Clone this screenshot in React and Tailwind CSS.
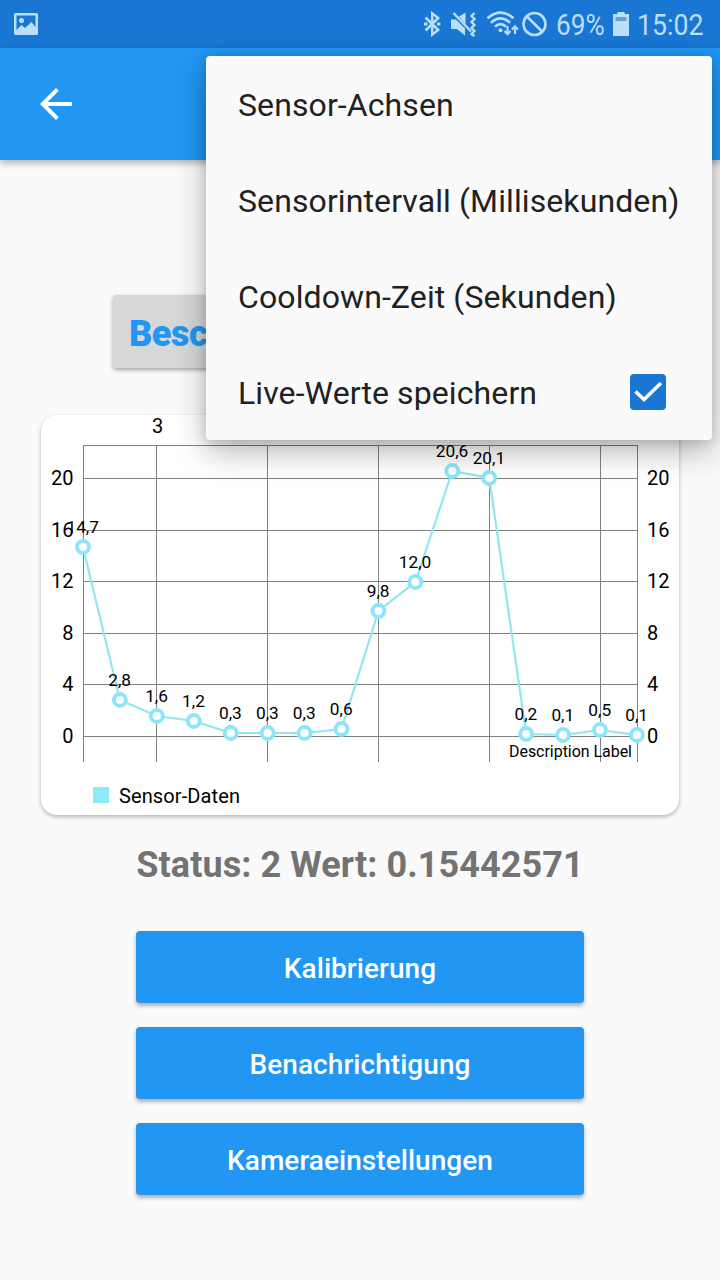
import React from "react";

const values = [
  [547, "14,7"], [700, "2,8"], [716, "1,6"], [721, "1,2"],
  [733, "0,3"], [733, "0,3"], [733, "0,3"], [729, "0,6"],
  [611, "9,8"], [582, "12,0"], [471, "20,6"], [478, "20,1"],
  [734, "0,2"], [735, "0,1"], [730, "0,5"], [735, "0,1"],
];
const points = values.map(([y, label], i) => ({ x: 83 + i * 36.93, y, label }));
const rows = [[478.5, 20], [530.5, 16], [581.5, 12], [633.5, 8], [684.5, 4], [736.5, 0]];
const columns = [83.5, 156.5, 267.5, 378.5, 489.5, 600.5, 637.5];

function StatusBar() {
  return (
    <div className="flex h-12 items-center bg-[#1976d2] pl-3.5 pr-4 text-[#bbdefb]">
      <svg className="h-6 w-6" viewBox="0 0 24 24" fill="currentColor">
        <path fillRule="evenodd" d="M1.500 1h21q1.500 0 1.500 1.500v19q0 1.500-1.500 1.500h-21Q0 23 0 21.500v-19Q0 1 1.500 1Zm1 2.500V18l5-5 3.500 3 6.500-6 4 5V3.500Z" />
        <circle cx="7.500" cy="8.500" r="2.500" />
      </svg>
      <svg className="ml-auto h-12 w-[128px]" viewBox="422 0 128 48" fill="none" stroke="currentColor" strokeWidth="2">
        <path strokeWidth="2.500" d="m425.500 17.500 12.700 12.500-6 4.700V13.300l6 4.700-12.700 12.500" />
        <path fill="currentColor" stroke="none" d="M424 22.400h3.500v3.200H424zM437 22.400h3.500v3.200H437zM451 19.500h5l9 9v7l-8-6.500h-6zM459 16.500l6.500-4v12z" />
        <path strokeWidth="2.400" d="m453.500 13 17.500 18.500" />
        <path strokeWidth="2.400" d="m474.500 13-3 3 3 3-3 3 3 3-3 3 3 3-3 3 3 2" />
        <path strokeWidth="2.600" d="M487.500 18.200q13.500-11 26 0M491 22.700q9.500-8.500 19 0M495 26.700q5.500-5 11 0" />
        <circle cx="500.500" cy="30.200" r="2" fill="currentColor" stroke="none" />
        <path strokeWidth="2" d="M507.500 26v8m-3-3 3 3.300 3-3.300M515 34v-7.500m-3 3 3-3.200 3 3.200" />
        <circle cx="534.500" cy="24" r="11" strokeWidth="2.600" />
        <path strokeWidth="2.600" d="m527 16.500 15 15" />
      </svg>
      <span className="ml-[6px] w-[49px] whitespace-nowrap font-[Roboto,sans-serif] text-[30px] leading-none"><span className="inline-block origin-left translate-y-px scale-x-[0.875]">69%</span></span>
      <svg className="ml-[8px] h-6 w-4" viewBox="0 0 16 24" fill="currentColor">
        <path d="M4.500 0h7v2H16v22H0V2h4.500z" />
        <path fill="#64a0d8" d="M2.500 5h11v4h-11z" />
      </svg>
      <span className="ml-[8px] w-[67px] whitespace-nowrap font-[Roboto,sans-serif] text-[30px] leading-none"><span className="inline-block origin-left translate-y-px scale-x-[0.89]">15:02</span></span>
    </div>
  );
}

function SensorChart() {
  return (
    <svg className="block h-[400px] w-[638px] overflow-visible font-[Roboto,sans-serif]" viewBox="41 415 638 400" fill="black">
      <g stroke="#808080" strokeWidth="1">
        <path d="M83 445.500H638" />
        {rows.map(([y]) => <path key={y} d={`M83 ${y}H638`} />)}
        {columns.map((x) => <path key={x} d={`M${x} 445V762`} />)}
      </g>
      <text x="157.500" y="432.500" fontSize="20" textAnchor="middle">3</text>
      {rows.map(([y, label]) => (
        <g key={label} fontSize="20">
          <text x="73.500" y={y + 6.5} textAnchor="end">{label}</text>
          <text x="647" y={y + 6.5}>{label}</text>
        </g>
      ))}
      <polyline points={points.map((p) => `${p.x},${p.y}`).join(" ")} fill="none" stroke="#94e6ee" strokeWidth="2.200" />
      {points.map((p) => <circle key={p.x} cx={p.x} cy={p.y} r="6" fill="white" stroke="#8ce6fb" strokeWidth="3.900" />)}
      {points.map((p) => <text key={p.x} x={p.x - 0.3} y={p.y - 13.7} fontSize="17.300" textAnchor="middle">{p.label}</text>)}
      <text x="632" y="757" fontSize="16" textAnchor="end" textLength="123">Description Label</text>
      <path fill="#8ceafc" d="M93 787h16v16H93z" />
      <text x="119" y="803" fontSize="20" textLength="121">Sensor-Daten</text>
    </svg>
  );
}

function OverflowMenu() {
  return (
    <div className="absolute left-[206px] top-14 flex h-96 w-[506px] flex-col rounded-[4px] bg-[#fafafa] text-[32px] leading-none tracking-[0.1px] text-[#212121] shadow-[0_12px_32px_rgba(0,0,0,0.28),0_2px_12px_rgba(0,0,0,0.14)]">
      {["Sensor-Achsen", "Sensorintervall (Millisekunden)", "Cooldown-Zeit (Sekunden)"].map((item) => (
        <button key={item} className="flex h-24 items-center whitespace-nowrap pl-8 pt-0.5">{item}</button>
      ))}
      <button className="flex h-24 items-center justify-between pl-8 pr-[46px]">
        <span className="pt-0.5">Live-Werte speichern</span>
        <svg className="h-9 w-9" viewBox="0 0 36 36">
          <rect width="36" height="36" rx="4" fill="#1976d2" />
          <path d="m5.500 17.500 8.500 8L31 9" fill="none" stroke="#fafafa" strokeWidth="3.600" />
        </svg>
      </button>
    </div>
  );
}

export default function App() {
  return (
    <div className="relative flex h-[1280px] w-[720px] flex-col overflow-hidden bg-[#fafafa] font-[Roboto,sans-serif]">
      <StatusBar />
      <header className="flex h-28 shrink-0 items-center bg-[#2196f3] pl-10 shadow-[0_3px_7px_rgba(0,0,0,0.3)]">
        <svg className="h-8 w-8" viewBox="0 0 32 32" fill="none" stroke="white" strokeWidth="4">
          <path d="M17.400 1.400 2.800 16l14.600 14.600M3 16h29" />
        </svg>
      </header>
      <main className="flex flex-col items-center pt-[135px]">
        <button className="h-[73px] w-[494px] rounded-[4px] bg-[#d6d7d7] pl-4 pt-1 text-left text-[36px] font-black leading-none tracking-[-0.4px] text-[#2196f3] shadow-[0_2px_4px_rgba(0,0,0,0.35)]">Beschleunigungssensor</button>
        <section className="mt-[47px] h-[400px] w-[638px] rounded-[16px] bg-white shadow-[0_2px_4px_rgba(0,0,0,0.28)]">
          <SensorChart />
        </section>
        <p className="mt-[29px] whitespace-nowrap text-[36px] font-bold leading-[42px] tracking-[0.08px] text-[#737373]">Status: 2 Wert: 0.15442571</p>
        <div className="mt-[45px] flex flex-col gap-6">
          {["Kalibrierung", "Benachrichtigung", "Kameraeinstellungen"].map((label) => (
            <button key={label} className="h-[72px] w-[448px] rounded-[4px] bg-[#2196f3] pt-[3px] text-[28px] font-medium leading-none tracking-[0.05px] text-white shadow-[0_3px_4px_rgba(0,0,0,0.3)]">{label}</button>
          ))}
        </div>
      </main>
      <OverflowMenu />
    </div>
  );
}
